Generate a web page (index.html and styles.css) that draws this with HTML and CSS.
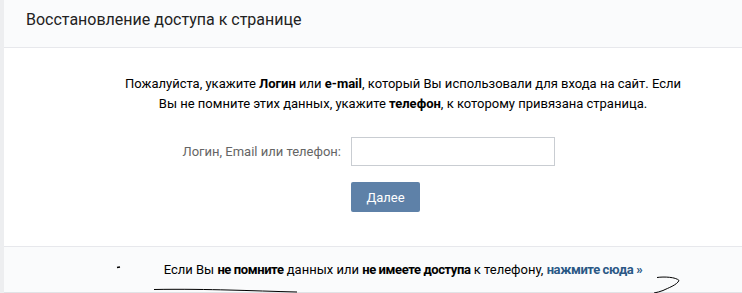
FILE: index.html
```html
<!DOCTYPE html>
<html lang="ru">
<head>
<meta charset="utf-8">
<title>Восстановление доступа к странице</title>
<link rel="stylesheet" href="styles.css">
</head>
<body>
<div class="page">
  <div class="card">
    <div class="card-header">Восстановление доступа к странице</div>
    <div class="card-body">
      <p class="intro">Пожалуйста, укажите <b>Логин</b> или <b>e-mail</b>, который Вы использовали для входа на сайт. Если<br>Вы не помните этих данных, укажите <b>телефон</b>, к которому привязана страница.</p>
      <form class="form">
        <label class="form-label" for="login">Логин, Email или телефон:</label>
        <input class="form-input" id="login" type="text">
        <button class="btn" type="button">Далее</button>
      </form>
    </div>
    <div class="card-footer">Если Вы <b>не помните</b> данных или <b>не имеете доступа</b> к телефону, <a class="link" href="#">нажмите сюда »</a></div>
  </div>
</div>
<svg class="scribbles" width="742" height="293" viewBox="0 0 742 293">
  <path d="M117 267.5 L120 267" stroke="#000" stroke-width="1.4" fill="none"/>
  <path d="M154 289.5 C 180 289, 210 289.5, 228 290 C 250 290.5, 275 291.5, 297 292" stroke="#000" stroke-width="1" fill="none"/>
  <path d="M657 277.5 C 664 276.5, 676 277, 679 280.5 C 677 285, 668 288, 663 290.5 C 660 291.5, 657 292.5, 654 293" stroke="#000" stroke-width="1" fill="none"/>
</svg>
</body>
</html>
```
FILE: styles.css
```css
* { box-sizing: border-box; }
html, body { margin: 0; padding: 0; }
body {
  background: #edeef0;
  font-family: Roboto, "Open Sans", "Liberation Sans", sans-serif;
  font-size: 13px;
  color: #000;
  width: 742px;
  height: 293px;
  overflow: hidden;
  position: relative;
}
.page {
  padding-left: 4px;
}
.card {
  background: #fff;
  border-bottom: 1px solid #e1e3e6;
}
.card-header {
  height: 48px;
  padding: 10px 0 0 22px;
  font-size: 16px;
  line-height: 20px;
  color: #222;
  background: #fafbfc;
  border-bottom: 1px solid #e7e8ec;
}
.card-body {
  padding: 26px 0 34px 60px;
}
.intro {
  margin: 0;
  text-align: center;
  line-height: 20px;
}
.intro b { font-weight: 700; }
.form {
  display: grid;
  grid-template-columns: 200px 204px;
  column-gap: 10px;
  row-gap: 16px;
  margin: 23px 0 0 77px;
  align-items: center;
}
.form-label {
  text-align: right;
  color: #656565;
}
.form-input {
  height: 29px;
  border: 1px solid #c9cdd2;
  border-radius: 0;
  margin: 0;
  font: inherit;
  padding: 0 6px;
}
.btn {
  grid-column: 2;
  justify-self: start;
  width: 69px;
  height: 30px;
  border: 0;
  border-radius: 2px;
  background: #5e81a8;
  color: #fff;
  font-family: inherit;
  font-size: 13px;
  padding: 0;
}
.card-footer {
  height: 46px;
  padding: 13px 0 0 60px;
  text-align: center;
  line-height: 20px;
  background: #fafbfc;
  border-top: 1px solid #e7e8ec;
  color: #000;
}
.card-footer b { font-weight: 700; letter-spacing: -0.4px; }
.link {
  color: #2a5885;
  font-weight: 700;
  letter-spacing: -0.4px;
  text-decoration: none;
}
.scribbles {
  position: absolute;
  left: 0;
  top: 0;
  pointer-events: none;
}
```
